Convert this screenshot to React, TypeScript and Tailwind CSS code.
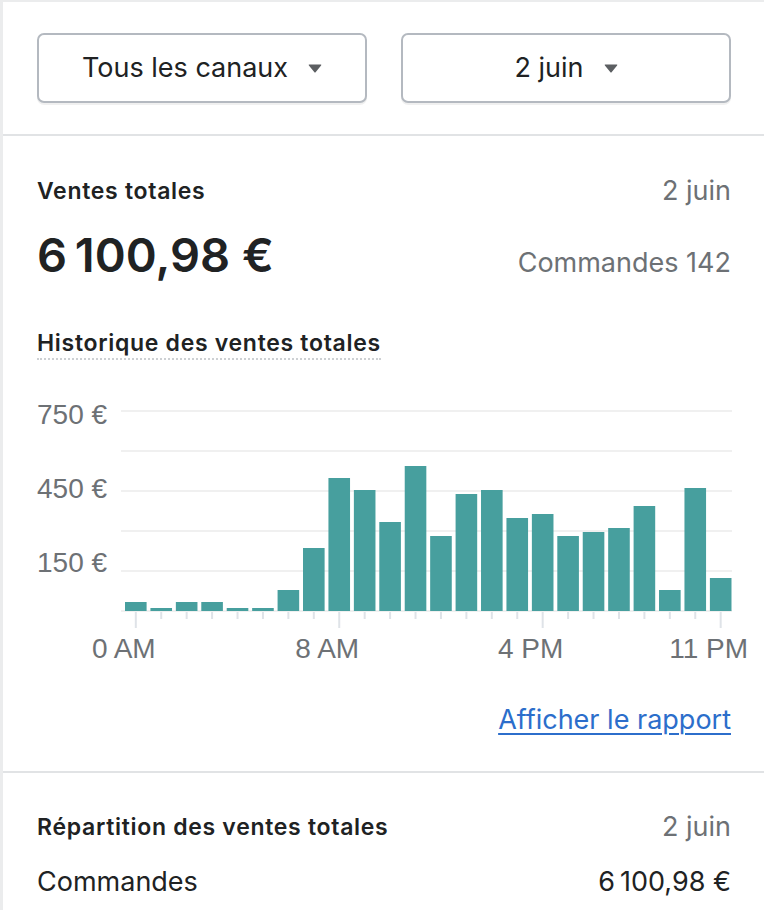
import React from 'react';

const bars = [9, 3, 9, 9, 3, 3, 21, 63, 133, 121, 89, 145, 75, 117, 121, 93, 97, 75, 79, 83, 105, 21, 123, 33];
const pitch = 25.43;
const barWidth = 21.6;
const x0 = 88;
const base = 216;
const grid = [16, 56, 96, 136, 176, 216];
const majorTicks = [0, 8, 16, 23];
const xLabels: [number, string][] = [
  [0, '0 AM'],
  [8, '8 AM'],
  [16, '4 PM'],
  [23, '11 PM'],
];
const yLabels: [number, string][] = [
  [29, '750 €'],
  [103, '450 €'],
  [177, '150 €'],
];

const total = '6\u202F100,98\u00A0€';

function Caret() {
  return (
    <svg width="14" height="9" viewBox="0 0 14 9" className="shrink-0">
      <path d="M1.2 0.5 H12.8 Q13.8 0.5 13.1 1.5 L7.8 8 Q7 9 6.2 8 L0.9 1.5 Q0.2 0.5 1.2 0.5 Z" fill="#5c5f62" />
    </svg>
  );
}

function FilterButton({ label }: { label: string }) {
  return (
    <button
      type="button"
      className="flex h-[70px] flex-1 items-center justify-center gap-[20px] rounded-[7px] border-2 border-[#b4b9c0] bg-white text-[27px] text-[#202223] shadow-[0_2px_0_rgba(0,0,0,0.06)]"
    >
      <span>{label}</span>
      <Caret />
    </button>
  );
}

function SalesChart() {
  const tickX = (i: number) => x0 + i * pitch + barWidth / 2;
  return (
    <svg width="727" height="275" viewBox="0 0 727 275" className="block">
      {grid.map((y) => (
        <line key={y} x1="84" x2="695" y1={y} y2={y} stroke="#ebebeb" strokeWidth="1.5" />
      ))}
      {bars.map((h, i) => (
        <rect key={i} x={x0 + i * pitch} y={base - h} width={barWidth} height={h} fill="#479f9e" />
      ))}
      {bars.map((_, i) => (
        <line
          key={'t' + i}
          x1={tickX(i)}
          x2={tickX(i)}
          y1={base + 1}
          y2={majorTicks.includes(i) ? 233 : 224}
          stroke="#dfe3e8"
          strokeWidth="2"
        />
      ))}
      <g fill="#6d7175" fontFamily="'Liberation Sans', Arial, sans-serif" fontSize="28">
        {yLabels.map(([y, t]) => (
          <text key={t} x="0" y={y}>
            {t}
          </text>
        ))}
        {xLabels.map(([i, t]) => (
          <text key={t} x={tickX(i) - 12} y="263" textAnchor="middle">
            {t}
          </text>
        ))}
      </g>
    </svg>
  );
}

export default function App() {
  return (
    <div
      className="h-[910px] w-[764px] overflow-hidden border-l-[3px] border-t-2 border-[#ebeced] bg-white text-[#202223]"
      style={{ fontFamily: "Inter, 'Liberation Sans', sans-serif" }}
    >
      <div className="flex gap-[34px] border-b-2 border-[#e1e3e5] pb-[31px] pl-[34px] pr-[33px] pt-[31px]">
        <FilterButton label="Tous les canaux" />
        <FilterButton label="2 juin" />
      </div>

      <div className="border-b-2 border-[#e1e3e5] pb-[35px] pl-[34px] pr-[33px] pt-[39px]">
        <div className="flex h-[32px] items-center justify-between">
          <span className="text-[23px] font-semibold tracking-[0.7px]">Ventes totales</span>
          <span className="text-[27px] text-[#6d7175]">2 juin</span>
        </div>
        <div className="mt-[20px] flex h-[56px] items-baseline justify-between">
          <span className="text-[47px] font-semibold leading-[56px]">{total}</span>
          <span className="text-[27px] text-[#6d7175]">Commandes 142</span>
        </div>
        <div className="mt-[45px] flex">
          <span className="border-b-2 border-dotted border-[#cdd0d3] text-[23px] font-semibold leading-[30px] tracking-[0.7px]">
            Historique des ventes totales
          </span>
        </div>
        <div className="mt-[35px] w-[727px]">
          <SalesChart />
        </div>
        <div className="mt-[34px] flex h-[32px] items-center justify-end">
          <a href="#" className="text-[27px] text-[#2c6ecb] underline decoration-2 underline-offset-4">
            Afficher le rapport
          </a>
        </div>
      </div>

      <div className="pl-[34px] pr-[33px] pt-[38px]">
        <div className="flex h-[32px] items-center justify-between">
          <span className="text-[23px] font-semibold tracking-[0.7px]">Répartition des ventes totales</span>
          <span className="text-[27px] text-[#6d7175]">2 juin</span>
        </div>
        <div className="mt-[23px] flex h-[32px] items-center justify-between text-[27px]">
          <span>Commandes</span>
          <span>{total}</span>
        </div>
      </div>
    </div>
  );
}
